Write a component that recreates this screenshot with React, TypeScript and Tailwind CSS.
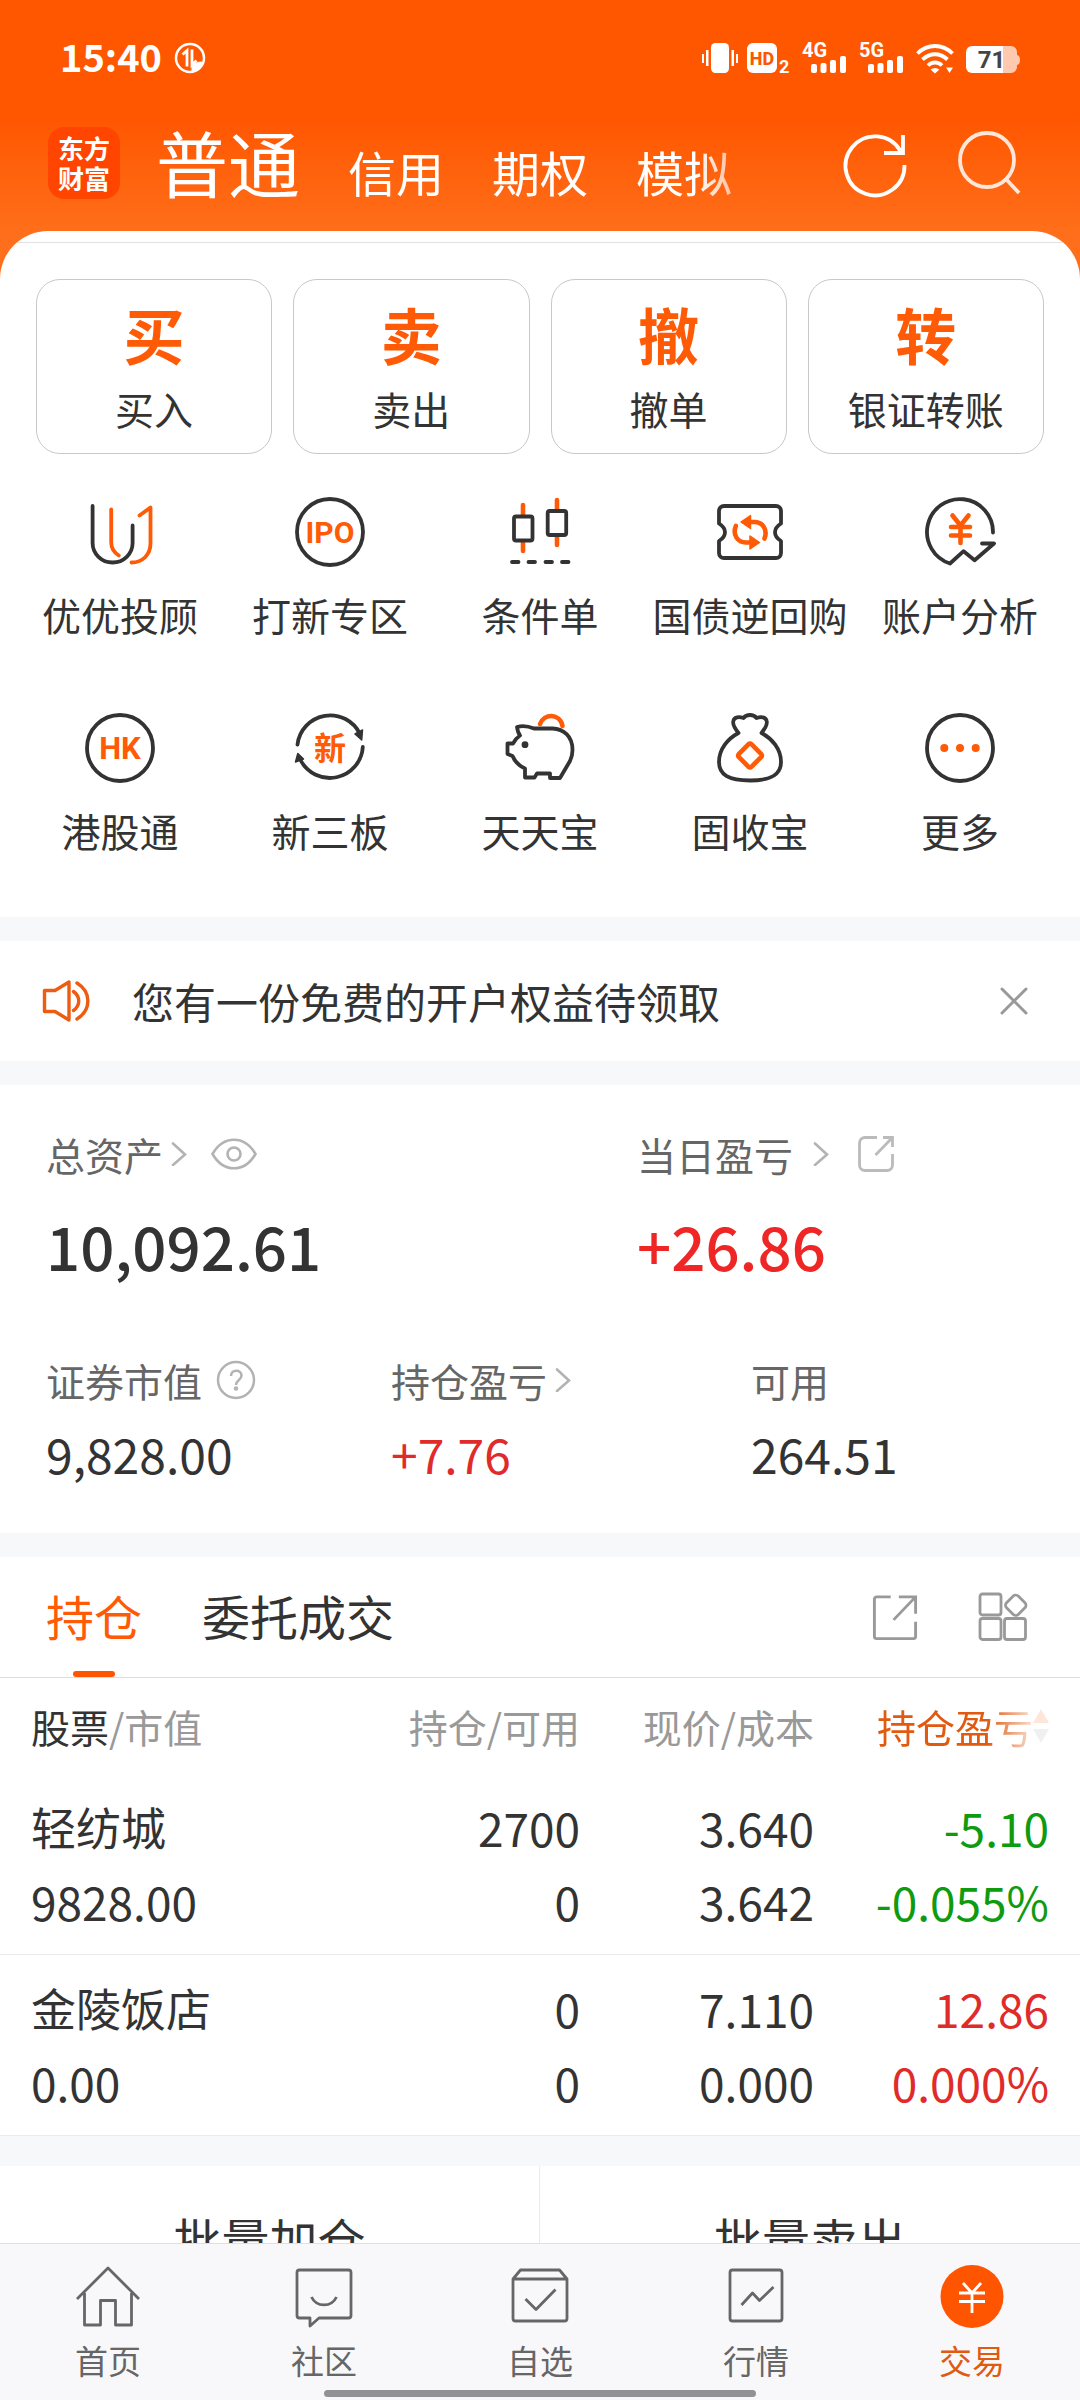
import React, { useState, ReactElement, ReactNode } from 'react';

type IconProps = { children: ReactNode };

// shared 72px canvas for the shortcut grid icons
const GridIcon: React.FC<IconProps> = ({ children }): ReactElement => (
  <svg
    className="size-[72px]"
    viewBox="0 0 72 72"
    fill="none"
    stroke="#333"
    strokeWidth="3.8"
    strokeLinecap="round"
    strokeLinejoin="round"
    aria-hidden="true"
  >
    {children}
  </svg>
);

const NavIcon: React.FC<IconProps> = ({ children }): ReactElement => (
  <svg
    className="size-16 overflow-visible"
    viewBox="0 0 64 64"
    fill="none"
    stroke="#666"
    strokeWidth="2.8"
    strokeLinejoin="round"
    aria-hidden="true"
  >
    {children}
  </svg>
);

const Chevron = (): ReactElement => (
  <svg className="h-6 w-4" viewBox="0 0 16 24" fill="none" stroke="#b3b3b3" strokeWidth="2.6" strokeLinecap="round" aria-hidden="true">
    <path d="M2 1.500 14 12.500 2 23" />
  </svg>
);

const tradeTabs = ['普通', '信用', '期权', '模拟'];

const actions = [
  { mark: '买', label: '买入' },
  { mark: '卖', label: '卖出' },
  { mark: '撤', label: '撤单' },
  { mark: '转', label: '银证转账' },
];

const shortcuts = [
  {
    label: '优优投顾',
    icon: (
      <GridIcon>
        <path d="M8.600 10v37a20 19.500 0 0 0 40 0V29.500" />
        <path stroke="#ff5a05" d="M27.200 13.500V46c0 6 3 10.500 7.600 13.500M55.500 19.500l11-8V47c0 12-8 19.500-19 19.500" />
      </GridIcon>
    ),
  },
  {
    label: '打新专区',
    icon: (
      <GridIcon>
        <circle cx="36" cy="36" r="33" />
        <text x="36" y="47" textAnchor="middle" fontFamily="Roboto, sans-serif" fontWeight="700" fontSize="30" fill="#ff5a05" stroke="none">
          IPO
        </text>
      </GridIcon>
    ),
  },
  {
    label: '条件单',
    icon: (
      <GridIcon>
        <path stroke="#ff5a05" strokeWidth="4.600" d="M19 9v10M19 46v9M53 4v10M53 40v9" />
        <rect x="10" y="20.500" width="18.500" height="24" rx="2" />
        <rect x="43.700" y="15" width="18.500" height="24" rx="2" />
        <path d="M8 66h6.500M24.500 66H31M41.500 66H48M58 66h6.500" />
      </GridIcon>
    ),
  },
  {
    label: '国债逆回购',
    icon: (
      <GridIcon>
        <path d="M10 10h52a5 5 0 0 1 5 5v12.500c-8 5-8 12.500 0 17.500v12a5 5 0 0 1-5 5H10a5 5 0 0 1-5-5V45c8-5 8-12.500 0-17.500V15a5 5 0 0 1 5-5Z" />
        <path stroke="#ff5a05" strokeWidth="4.600" d="M21.800 30c-3.500 9 2 16.500 10 16.500h4M50.500 42.500c3.500-9-2-16.500-10-16.500h-4" />
        <path fill="#ff5a05" stroke="#ff5a05" strokeWidth="1.500" d="M36 40v13l9.500-6.500ZM36.500 19.500v13L27 26Z" />
      </GridIcon>
    ),
  },
  {
    label: '账户分析',
    icon: (
      <GridIcon>
        <path d="M69 36.500A33 33 0 1 0 26 67.500l13.600-12.300 11 9 19.400-16.700H58" />
        <path stroke="#ff5a05" strokeWidth="4.600" d="m28.500 19.500 8 10 8-10M36.500 29.500V47M27 31h19M27 39.500h19" />
      </GridIcon>
    ),
  },
  {
    label: '港股通',
    icon: (
      <GridIcon>
        <circle cx="36" cy="36" r="33" />
        <text x="36" y="47" textAnchor="middle" fontFamily="Roboto, sans-serif" fontWeight="700" fontSize="31" fill="#ff5a05" stroke="none">
          HK
        </text>
      </GridIcon>
    ),
  },
  {
    label: '新三板',
    icon: (
      <GridIcon>
        <path d="M3.500 32.500A33 33 0 0 1 66 22M68.800 35A33 33 0 0 1 6.500 48" />
        <path fill="#333" strokeWidth="1.500" d="m61 22 7.500-4-.8 10ZM3.800 41.500 1.500 50l8-3Z" />
        <text x="36" y="48" textAnchor="middle" fontFamily="'Noto Sans CJK SC', sans-serif" fontWeight="700" fontSize="32" fill="#ff5a05" stroke="none">
          新
        </text>
      </GridIcon>
    ),
  },
  {
    label: '天天宝',
    icon: (
      <GridIcon>
        <path d="M3.500 31.500V42l5 2c2.500 6 7 10 12.500 12.500v9h9.500l2.500-4h13V66h10l10-17c2-4 2.500-7 2.500-11 0-14-9-21-20-21.500H30c-6-2.500-12-3-17-1.500.5 3.500 1 6 3 8.500-3 2-5 4.500-7 8Z" />
        <circle cx="21" cy="32.700" r="3.400" fill="#333" stroke="none" />
        <path stroke="#ff5a05" strokeWidth="4.600" d="M36 12c4-11 20-11 22.500 2" />
      </GridIcon>
    ),
  },
  {
    label: '固收宝',
    icon: (
      <GridIcon>
        <path d="M24.500 21c-4-5-6.500-9-5-12.500C20.500 5 25 4.500 29.500 6c3-4 10-4 13 0 4.500-1.500 9-1 10 2.500 1.500 3.500-1 7.500-5 12.500C58 26.500 67 37 67 50s-10 18.500-31 18.500S5 63 5 50s9-23.500 19.500-29Z" />
        <rect x="27" y="34.500" width="18" height="18" rx="2" transform="rotate(45 36 43.500)" stroke="#ff5a05" strokeWidth="4.600" />
      </GridIcon>
    ),
  },
  {
    label: '更多',
    icon: (
      <GridIcon>
        <circle cx="36" cy="36" r="33" />
        <g fill="#ff5a05" stroke="none">
          <circle cx="20.300" cy="36" r="4" />
          <circle cx="36" cy="36" r="4" />
          <circle cx="51.700" cy="36" r="4" />
        </g>
      </GridIcon>
    ),
  },
];

const holdings = [
  { name: '轻纺城', value: '9828.00', qty: '2700', free: '0', price: '3.640', cost: '3.642', pnl: '-5.10', rate: '-0.055%', color: 'text-[#0f9b0f]' },
  { name: '金陵饭店', value: '0.00', qty: '0', free: '0', price: '7.110', cost: '0.000', pnl: '12.86', rate: '0.000%', color: 'text-[#e02b2b]' },
];

const navItems = [
  {
    label: '首页',
    icon: (
      <NavIcon>
        <path d="M1 37 32 6l31 31M8.500 31v32h16V38.500h15V63h16V31" />
      </NavIcon>
    ),
  },
  {
    label: '社区',
    icon: (
      <NavIcon>
        <path d="M7.500 8h49a2.500 2.500 0 0 1 2.500 2.500v43a2.500 2.500 0 0 1-2.500 2.500H27l-9 8v-8H7.500A2.500 2.500 0 0 1 5 53.500v-43A2.500 2.500 0 0 1 7.500 8ZM19.500 35c5 10.500 20 10.500 25 0" />
      </NavIcon>
    ),
  },
  {
    label: '自选',
    icon: (
      <NavIcon>
        <path d="M5 17 12.500 8h39L59 17v39.500a2.500 2.500 0 0 1-2.500 2.500h-49A2.500 2.500 0 0 1 5 56.500V17h54M17.500 37 28 47.500l19.500-20" />
      </NavIcon>
    ),
  },
  {
    label: '行情',
    icon: (
      <NavIcon>
        <rect x="6" y="8" width="52" height="51" rx="2.500" />
        <path d="m17.500 43 11-12 7 7.500L49.500 25" />
      </NavIcon>
    ),
  },
  {
    label: '交易',
    icon: (
      <NavIcon>
        <circle cx="32" cy="34.500" r="31.500" fill="#ff5500" stroke="none" />
        <path stroke="#fff" d="m23 21 9 10 9-10M32 31v20M19 31h26M19 39.500h26" />
      </NavIcon>
    ),
  },
];

const StatusBar = (): ReactElement => (
  <div className="flex h-[115px] items-center pl-[60px] pr-[60px] text-white">
    <span className="h-[42px] text-[38px] font-bold leading-[38px]">15:40</span>
    <svg className="ml-3 size-8" viewBox="0 0 32 32" fill="none" stroke="#fff" strokeWidth="2.500" aria-hidden="true">
      <circle cx="16" cy="16" r="14" />
      <path strokeWidth="2.800" d="M8.500 12.500 13 8.500v16M18 7.500V23l4.500-4.500" />
      <path fill="#fff" strokeWidth="1" d="M18 27c0-5 5-7 10-7-1 5-5 9-10 9Z" />
    </svg>
    <div className="ml-auto flex items-center gap-2">
      <svg className="h-8 w-9" viewBox="0 0 36 32" fill="#fff" aria-hidden="true">
        <rect x="9" y="1" width="18" height="30" rx="4.500" />
        <path d="M4 8h2.500v16H4ZM0 12h2v9H0ZM29.500 8H32v16h-2.500ZM34 12h2v9h-2Z" />
      </svg>
      <svg className="h-8 w-11 overflow-visible" viewBox="0 0 44 32" fill="#fff" aria-hidden="true">
        <rect x="1" y="1" width="30" height="30" rx="6" />
        <text x="16" y="22.500" textAnchor="middle" fontFamily="Roboto, sans-serif" fontWeight="800" fontSize="18" fill="#ff5600">HD</text>
        <text x="33" y="31" fontFamily="Roboto, sans-serif" fontWeight="700" fontSize="18">2</text>
      </svg>
      {['4G', '5G'].map((net) => (
        <svg key={net} className="ml-1 h-8 w-[45px] overflow-visible" viewBox="0 0 45 32" fill="#fff" aria-hidden="true">
          <text x="0" y="15" fontFamily="Roboto, sans-serif" fontWeight="700" fontSize="20">{net}</text>
          <rect x="9" y="22" width="6" height="9" rx="2" />
          <rect x="18.500" y="21" width="6" height="10" rx="2" />
          <rect x="28" y="18" width="6" height="13" rx="2" />
          <rect x="38" y="14" width="6" height="17" rx="2" />
        </svg>
      ))}
      <svg className="ml-1 h-8 w-[38px]" viewBox="0 0 38 32" fill="none" stroke="#fff" strokeWidth="3.800" aria-hidden="true">
        <path d="M1.500 11.500c10-10 25-10 35 0M6.500 17.500c7.500-7 17.500-7 25 0M12 23.500c4-4 10-4 14 0" />
        <path fill="#fff" stroke="none" d="M14.500 27.500c3-2 6-2 9 0L19 31.500ZM30 25.500h7L33.500 31Z" />
      </svg>
      <svg className="ml-1 h-8 w-[54px] overflow-visible" viewBox="0 0 54 32" aria-hidden="true">
        <path fill="#ffc9b0" d="M36 4h9a6 6 0 0 1 6 6v3c4 0 4 10 0 10v2a6 6 0 0 1-6 6h-9Z" />
        <path fill="#fff" d="M6 4h31v27H6a6 6 0 0 1-6-6V10a6 6 0 0 1 6-6Z" />
        <text x="25.500" y="26" textAnchor="middle" fontFamily="Roboto, sans-serif" fontWeight="700" fontSize="24" fill="#444">71</text>
      </svg>
    </div>
  </div>
);

const TradeHeader = (): ReactElement => (
  <header className="flex h-[116px] items-start pl-12 pr-[59px] pt-3 text-white">
    <h1 className="mr-9 grid size-[72px] place-content-center rounded-2xl bg-[#ff4500] text-center text-[26px] font-bold leading-[30px]">
      东方
      <br />
      财富
    </h1>
    <nav className="flex h-[72px] min-w-0 flex-1 items-baseline gap-12 [mask-image:linear-gradient(to_right,black_540px,transparent_630px)]">
      {tradeTabs.map((tab, i) => (
        <a
          key={tab}
          href={`#tab-${i}`}
          className={i === 0 ? 'text-[72px] leading-[68px]' : 'text-5xl leading-[68px]'}
        >
          {tab}
        </a>
      ))}
    </nav>
    <button type="button" aria-label="刷新" className="mt-1">
      <svg className="size-16 overflow-visible" viewBox="0 0 64 64" fill="none" stroke="#fff" strokeWidth="3.800" aria-hidden="true">
        <path d="M57.500 20A29.500 29.500 0 1 0 61.500 34M60 4v18H41" />
      </svg>
    </button>
    <button type="button" aria-label="搜索" className="ml-[50px] mt-1">
      <svg className="size-16" viewBox="0 0 64 64" fill="none" stroke="#ffe6d9" strokeWidth="3.800" aria-hidden="true">
        <circle cx="30" cy="29" r="27" />
        <path d="m48 47 14 15" />
      </svg>
    </button>
  </header>
);

const QuickActions = (): ReactElement => (
  <section className="overflow-hidden rounded-t-[48px] bg-white pb-[60px]">
    <div className="h-3 border-b border-[#e2e2e2]" />
    <div className="mt-9 grid grid-cols-4 gap-[21px] px-9">
      {actions.map((action) => (
        <button key={action.mark} type="button" className="flex h-[175px] flex-col items-center rounded-3xl border border-[#c8c8c8] pt-[21px]">
          <span className="text-[61px] font-bold leading-[66px] text-[#ff5a05]">{action.mark}</span>
          <span className="mt-4 text-[39px] leading-[50px]">{action.label}</span>
        </button>
      ))}
    </div>
    <div className="mt-[42px] grid grid-cols-5 gap-y-[71px] px-[15px]">
      {shortcuts.map((item) => (
        <button key={item.label} type="button" className="flex flex-col items-center gap-[19px]">
          {item.icon}
          <span className="whitespace-nowrap text-[39px] leading-[54px]">{item.label}</span>
        </button>
      ))}
    </div>
  </section>
);

const Notice = ({ onClose }: { onClose: () => void }): ReactElement => (
  <section className="mt-6 flex h-[120px] items-center bg-white pl-[42px] pr-[52px]">
    <svg className="h-[42px] w-12" viewBox="0 0 48 42" fill="none" stroke="#ee5c12" strokeWidth="3.400" strokeLinecap="round" strokeLinejoin="round" aria-hidden="true">
      <path d="M2.500 10.500H13l14-8.500v38l-14-8.500H2.500ZM31.500 11.500c7 5 7 14 0 19M35 3c14.500 9 14.500 27 0 36" />
    </svg>
    <p className="ml-[42px] flex-1 text-[42px] leading-[60px]">您有一份免费的开户权益待领取</p>
    <button type="button" aria-label="关闭" onClick={onClose}>
      <svg className="size-7" viewBox="0 0 28 28" fill="none" stroke="#999" strokeWidth="3" strokeLinecap="round" aria-hidden="true">
        <path d="m2 2 24 24M26 2 2 26" />
      </svg>
    </button>
  </section>
);

const Assets = (): ReactElement => (
  <section className="mt-6 bg-white px-[46px] pb-[50px] pt-[42px]">
    <div className="grid grid-cols-[591fr_397fr]">
      <div>
        <div className="flex h-[54px] items-center text-[39px] text-[#666]">
          总资产
          <span className="ml-2"><Chevron /></span>
          <button type="button" aria-label="隐藏资产" className="ml-6">
            <svg className="h-8 w-[46px]" viewBox="0 0 46 32" fill="none" stroke="#b3b3b3" strokeWidth="2.600" aria-hidden="true">
              <path d="M1.500 16c11-19 32-19 43 0-11 19-32 19-43 0Z" />
              <circle cx="23" cy="16" r="6.500" />
            </svg>
          </button>
        </div>
        <p className="mt-7 text-[60px] font-medium leading-[72px]">10,092.61</p>
      </div>
      <div>
        <div className="flex h-[54px] items-center text-[39px] text-[#666]">
          当日盈亏
          <span className="ml-5"><Chevron /></span>
          <button type="button" aria-label="分享盈亏" className="ml-7">
            <svg className="size-[38px]" viewBox="0 0 38 38" fill="none" stroke="#bbb" strokeWidth="2.800" aria-hidden="true">
              <path d="M20 2.500H8A5.500 5.500 0 0 0 2.500 8v22A5.500 5.500 0 0 0 8 35.500h22a5.500 5.500 0 0 0 5.500-5.500V19M26 2.500h9.500V12M35.500 2.500 18.500 20" />
            </svg>
          </button>
        </div>
        <p className="mt-7 text-[60px] font-medium leading-[72px] text-[#ee2626]">+26.86</p>
      </div>
    </div>
    <div className="mt-[72px] grid grid-cols-[345fr_360fr_283fr]">
      <div>
        <div className="flex h-[54px] items-center text-[39px] text-[#666]">
          证券市值
          <button type="button" aria-label="说明" className="ml-[14px]">
            <svg className="size-10" viewBox="0 0 40 40" fill="none" stroke="#b3b3b3" strokeWidth="2.500" aria-hidden="true">
              <circle cx="20" cy="20" r="18" />
              <path d="M15 16c0-7 10.500-7 10.500-.5 0 4.500-5.500 4.500-5.500 9.500" />
              <circle cx="20" cy="28.500" r="1" />
            </svg>
          </button>
        </div>
        <p className="mt-4 text-5xl leading-[60px]">9,828.00</p>
      </div>
      <div>
        <div className="flex h-[54px] items-center text-[39px] text-[#666]">
          持仓盈亏
          <span className="ml-2"><Chevron /></span>
        </div>
        <p className="mt-4 text-5xl leading-[60px] text-[#e02b2b]">+7.76</p>
      </div>
      <div>
        <div className="flex h-[54px] items-center text-[39px] text-[#666]">可用</div>
        <p className="mt-4 text-5xl leading-[60px]">264.51</p>
      </div>
    </div>
  </section>
);

const Holdings = (): ReactElement => {
  const [tab, setTab] = useState(0);

  return (
    <section className="mt-6 bg-white">
      <div className="flex h-[121px] items-stretch border-b border-[#dedede] pl-[46px] pr-[52px]">
        <div className="flex flex-1 gap-[60px]">
          {['持仓', '委托成交'].map((name, i) => (
            <button
              key={name}
              type="button"
              onClick={() => setTab(i)}
              className={`flex flex-col items-center justify-between text-5xl ${tab === i ? 'text-[#ff5a05]' : ''}`}
            >
              <span className="pt-[22px] leading-[72px]">{name}</span>
              {tab === i && <span className="h-[6px] w-[42px] rounded-full bg-[#ff5500]" />}
            </button>
          ))}
        </div>
        <button type="button" aria-label="分享持仓">
          <svg className="size-[46px]" viewBox="0 0 48 48" fill="none" stroke="#999" strokeWidth="3" aria-hidden="true">
            <path d="M19.500 3H5a2.500 2.500 0 0 0-2.500 2.500V44A2.500 2.500 0 0 0 5 46.500h38a2.500 2.500 0 0 0 2.500-2.500V29M28 3h17.500v17.500M45.500 3 22.500 27" />
          </svg>
        </button>
        <button type="button" aria-label="更多功能" className="ml-[60px]">
          <svg className="size-[50px]" viewBox="0 0 50 50" fill="none" stroke="#999" strokeWidth="2.800" aria-hidden="true">
            <rect x="2" y="2" width="21" height="21" rx="2.500" />
            <rect x="2" y="26.500" width="21" height="21" rx="2.500" />
            <rect x="26.500" y="26.500" width="21" height="21" rx="2.500" />
            <rect x="29.500" y="5" width="16.500" height="16.500" rx="3.500" transform="rotate(45 37.750 13.250)" />
          </svg>
        </button>
      </div>
      <table className="w-full table-fixed text-right">
        <colgroup>
          <col />
          <col className="w-[234px]" />
          <col className="w-[234px]" />
          <col className="w-[266px]" />
        </colgroup>
        <thead>
          <tr className="h-24 text-[39px] text-[#999] [&>th]:font-normal">
            <th scope="col" className="pl-[31px] text-left"><span className="text-[#333]">股票</span>/市值</th>
            <th scope="col">持仓/可用</th>
            <th scope="col">现价/成本</th>
            <th scope="col" className="pr-[31px]">
              <button type="button" className="inline-flex items-center whitespace-nowrap text-[#e05a10] [mask-image:linear-gradient(to_right,black_64%,rgba(0,0,0,0.15)_92%)]">
                持仓盈亏
                <svg className="h-9 w-4" viewBox="0 0 16 36" aria-hidden="true">
                  <path fill="#ff5a05" d="M8 1 16 15H0Z" />
                  <path fill="#999" d="M0 21h16L8 35Z" />
                </svg>
              </button>
            </th>
          </tr>
        </thead>
        <tbody className="text-[46px] leading-[74px]">
          {holdings.map((row) => (
            <tr key={row.name} className="border-b border-[#ebebeb] [&>td]:pb-4 [&>td]:pt-4">
              <td className="pl-[31px] text-left">
                <div className="text-[45px]">{row.name}</div>
                <div>{row.value}</div>
              </td>
              <td>
                <div>{row.qty}</div>
                <div>{row.free}</div>
              </td>
              <td>
                <div>{row.price}</div>
                <div>{row.cost}</div>
              </td>
              <td className={`pr-[31px] ${row.color}`}>
                <div>{row.pnl}</div>
                <div>{row.rate}</div>
              </td>
            </tr>
          ))}
        </tbody>
      </table>
    </section>
  );
};

const App: React.FC = (): ReactElement => {
  const [showNotice, setShowNotice] = useState(true);

  return (
    <div className="flex h-screen flex-col bg-[#f7f8fa] font-['Noto_Sans_CJK_SC',sans-serif] text-[#333]">
      <main className="min-h-0 flex-1 overflow-y-auto [scrollbar-width:none]">
        <div className="bg-[linear-gradient(180deg,#ff5600_115px,#ff6f1b_235px)]">
          <StatusBar />
          <TradeHeader />
          <QuickActions />
        </div>
        {showNotice && <Notice onClose={() => setShowNotice(false)} />}
        <Assets />
        <Holdings />
        <div className="mt-[30px] grid grid-cols-2 divide-x divide-[#ebebeb] bg-white text-5xl leading-[72px]">
          <button type="button" className="py-9">批量加仓</button>
          <button type="button" className="py-9">批量卖出</button>
        </div>
      </main>
      <footer className="border-t border-[#e0e0e0] bg-[#f8f8fa] pb-[3px] pt-[18px]">
        <nav className="grid grid-cols-5">
          {navItems.map((item) => (
            <a
              key={item.label}
              href={`#${item.label}`}
              className={`flex flex-col items-center gap-3 text-[33px] leading-[44px] ${item.label === '交易' ? 'text-[#e05a10]' : 'text-[#666]'}`}
            >
              {item.icon}
              {item.label}
            </a>
          ))}
        </nav>
        <div className="mx-auto mt-2 h-[7px] w-2/5 rounded-full bg-[#929292]" />
      </footer>
    </div>
  );
};

export default App;
